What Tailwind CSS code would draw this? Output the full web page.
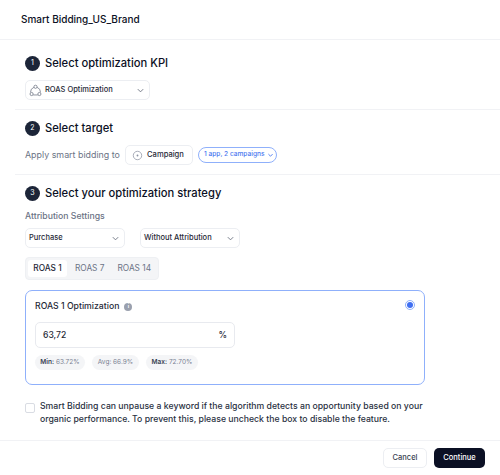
<!doctype html>
<html>
<head>
<meta charset="utf-8">
<script src="https://cdn.jsdelivr.net/npm/@tailwindcss/browser@4"></script>
</head>
<body class="bg-white">
<div class="w-[500px] h-[475px] overflow-hidden flex flex-col font-['Inter',sans-serif] text-[#0b1024]">

  <!-- header -->
  <div class="h-10 shrink-0 border-b border-[#f1f2f5] pl-[21px] flex items-center text-[10px] font-medium">Smart Bidding_US_Brand</div>

  <!-- step 1 -->
  <div class="ml-[15px] h-[70px] shrink-0 border-b border-[#f1f2f5] pl-[10px] pt-[15px]">
    <div class="flex items-center gap-[5px] h-4">
      <span class="w-[15px] h-[15px] rounded-full bg-[#1c2538] text-white text-[7px] flex items-center justify-center">1</span>
      <span class="text-[11.2px] font-medium">Select optimization KPI</span>
    </div>
    <div class="mt-[9px] w-[125px] h-5 border border-[#eceef2] rounded-[5px] flex items-center pl-[3px] pr-[3px]">
      <svg class="w-[13px] h-[13px] text-[#6b7280]" viewBox="0 0 14 14" fill="none" stroke="currentColor" stroke-width="0.8"><circle cx="7" cy="3" r="1.7"/><circle cx="2.8" cy="10.8" r="1.7"/><circle cx="11.2" cy="10.8" r="1.7"/><path d="M5.3 3.6A5.6 5.6 0 0 0 1.6 9M8.7 3.6A5.6 5.6 0 0 1 12.4 9M4.5 11.8h5"/></svg>
      <span class="ml-[3px] text-[7.5px] font-medium text-[#1f2937]">ROAS Optimization</span>
      <svg class="ml-auto mr-[1px] w-[9px] h-[9px] text-[#6b7280]" viewBox="0 0 10 10" fill="none" stroke="currentColor" stroke-width="1"><path d="M2 3.5 5 6.5 8 3.5"/></svg>
    </div>
  </div>

  <!-- step 2 -->
  <div class="ml-[15px] h-[65px] shrink-0 border-b border-[#f1f2f5] pl-[10px] pt-[10px]">
    <div class="flex items-center gap-[5px] h-4">
      <span class="w-[15px] h-[15px] rounded-full bg-[#1c2538] text-white text-[7px] flex items-center justify-center">2</span>
      <span class="text-[11.2px] font-medium">Select target</span>
    </div>
    <div class="mt-[9px] flex items-center">
      <span class="w-[100px] text-[8.9px] text-[#6b7385]">Apply smart bidding to</span>
      <div class="w-[68px] h-5 border border-[#eceef2] rounded-[5px] flex items-center pl-[6px]">
        <svg class="w-[11px] h-[11px] text-[#8a90a0]" viewBox="0 0 12 12" fill="none" stroke="currentColor" stroke-width="0.8"><circle cx="6" cy="6" r="4.6"/><circle cx="6" cy="6" r="1" fill="currentColor" stroke="none"/></svg>
        <span class="ml-[4px] text-[7.6px] font-medium text-[#1f2937]">Campaign</span>
      </div>
      <div class="ml-[5px] w-[79px] h-4 border border-[#8fb0fb] rounded-full flex items-center pl-[5px] text-[#4a78f0]">
        <span class="text-[6.6px] font-medium whitespace-nowrap">1 app, 2 campaigns</span>
        <svg class="ml-[2px] w-[7px] h-[7px]" viewBox="0 0 10 10" fill="none" stroke="currentColor" stroke-width="1.3"><path d="M2 3 5 6 8 3"/></svg>
      </div>
    </div>
  </div>

  <!-- step 3 -->
  <div class="h-[265px] shrink-0 px-[25px] pt-[10px]">
    <div class="flex items-center gap-[5px] h-4">
      <span class="w-[15px] h-[15px] rounded-full bg-[#1c2538] text-white text-[7px] flex items-center justify-center">3</span>
      <span class="text-[11.2px] font-medium">Select your optimization strategy</span>
    </div>
    <div class="mt-[10px] h-3 flex items-center text-[8.7px] font-medium text-[#6b7385]">Attribution Settings</div>
    <div class="mt-[5px] flex gap-[15px]">
      <div class="w-[100px] h-5 border border-[#eceef2] rounded-[5px] flex items-center pl-[3px] pr-[3px]">
        <span class="text-[7.5px] font-medium text-[#1f2937]">Purchase</span>
        <svg class="ml-auto mr-[1px] w-[9px] h-[9px] text-[#6b7280]" viewBox="0 0 10 10" fill="none" stroke="currentColor" stroke-width="1"><path d="M2 3.5 5 6.5 8 3.5"/></svg>
      </div>
      <div class="w-[100px] h-5 border border-[#eceef2] rounded-[5px] flex items-center pl-[3px] pr-[3px]">
        <span class="text-[7.5px] font-medium text-[#1f2937] whitespace-nowrap">Without Attribution</span>
        <svg class="ml-auto mr-[1px] w-[9px] h-[9px] text-[#6b7280]" viewBox="0 0 10 10" fill="none" stroke="currentColor" stroke-width="1"><path d="M2 3.5 5 6.5 8 3.5"/></svg>
      </div>
    </div>

    <div class="mt-[9px] w-[134px] h-[23px] bg-[#f4f5f7] border border-[#eef0f3] rounded-[4px] flex items-center p-[2px] text-[8.3px] text-[#6b7385]">
      <span class="w-[39px] h-[17px] bg-white rounded-[3px] flex items-center justify-center font-medium text-[#1f2937]">ROAS 1</span>
      <span class="ml-[8px] whitespace-nowrap">ROAS 7</span>
      <span class="ml-[13px] whitespace-nowrap">ROAS 14</span>
    </div>

    <div class="mt-[10px] relative w-[400px] h-[95px] border border-[#8fb0fb] rounded-[7px] pl-[9px] pt-[10px]">
      <div class="flex items-center gap-[5px] h-[10px] pt-px">
        <span class="text-[8.7px] font-medium text-[#1f2937]">ROAS 1 Optimization</span>
        <span class="w-2 h-2 rounded-full bg-[#9aa0ae] text-white text-[5px] font-bold flex items-center justify-center">i</span>
      </div>
      <div class="mt-[11px] w-[200px] h-[26px] border border-[#e8eaef] rounded-[5px] flex items-center justify-between px-[7px] text-[8.6px] font-medium text-[#1f2937]">
        <span>63,72</span><span>%</span>
      </div>
      <div class="mt-[7px] flex gap-[7px] text-[6.5px] text-[#7a8192]">
        <span class="h-[15px] w-[50px] rounded-full bg-[#f4f5f7] flex items-center justify-center whitespace-nowrap"><b class="font-semibold text-[#374151]">Min:</b>&nbsp;63.72%</span>
        <span class="h-[15px] w-[47px] rounded-full bg-[#f4f5f7] flex items-center justify-center whitespace-nowrap">Avg:&nbsp;66.9%</span>
        <span class="h-[15px] w-[52px] rounded-full bg-[#f4f5f7] flex items-center justify-center whitespace-nowrap"><b class="font-semibold text-[#374151]">Max:</b>&nbsp;72.70%</span>
      </div>
      <!-- selected radio -->
      <span class="absolute right-[9px] top-[9px] w-[10px] h-[10px] rounded-full border border-[#8fb0fb] flex items-center justify-center">
        <span class="w-[6px] h-[6px] rounded-full bg-[#3f6ff2]"></span>
      </span>
    </div>

    <div class="mt-[15px] flex gap-[5px]">
      <span class="mt-[3px] w-[10px] h-[10px] shrink-0 border border-[#d9dce3] rounded-[2px]"></span>
      <p class="w-[395px] text-[8.7px] leading-[12.5px] font-medium text-[#2a3142]">Smart Bidding can unpause a keyword if the algorithm detects an opportunity based on your organic performance. To prevent this, please uncheck the box to disable the feature.</p>
    </div>
  </div>

  <!-- footer -->
  <div class="flex-1 border-t border-[#f1f2f5] flex justify-end items-start pt-[7px] pr-[15px] gap-[7px]">
    <button class="w-11 h-5 border border-[#eceef2] rounded-[5px] text-[7.5px] font-medium text-[#374151]">Cancel</button>
    <button class="w-[51px] h-5 bg-[#0b1024] rounded-[5px] text-[7.5px] font-medium text-white">Continue</button>
  </div>
</div>
</body>
</html>
